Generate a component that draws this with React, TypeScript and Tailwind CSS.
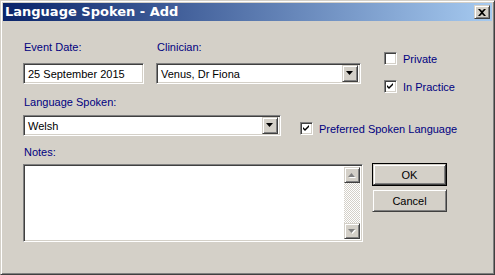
import React from "react";

const font = { fontFamily: '"Liberation Sans", Arial, sans-serif' };

function Arrow({ dir = "down", disabled = false }: { dir?: "up" | "down"; disabled?: boolean }) {
  const pts = dir === "down" ? "0,0 7,0 3.5,4" : "0,4 7,4 3.5,0";
  return (
    <svg width="8" height="5" viewBox="0 0 8 5" className="block">
      {disabled && <polygon points={pts} fill="#ffffff" transform="translate(1,1)" />}
      <polygon points={pts} fill={disabled ? "#808080" : "#000000"} />
    </svg>
  );
}

function RaisedBtn({ className = "", children }: { className?: string; children?: React.ReactNode }) {
  return (
    <div
      className={`flex items-center justify-center bg-[#d4d0c8] border border-t-[#d4d0c8] border-l-[#d4d0c8] border-b-[#404040] border-r-[#404040] shadow-[inset_1px_1px_#ffffff,inset_-1px_-1px_#808080] ${className}`}
    >
      {children}
    </div>
  );
}

function Sunken({ className = "", children }: { className?: string; children?: React.ReactNode }) {
  return (
    <div
      className={`bg-white border border-t-[#808080] border-l-[#808080] border-b-white border-r-white shadow-[inset_1px_1px_#404040,inset_-1px_-1px_#d4d0c8] ${className}`}
    >
      {children}
    </div>
  );
}

function Field({ value, width, dropdown = false }: { value: string; width: string; dropdown?: boolean }) {
  return (
    <Sunken className={`${width} h-[21px] flex items-center p-[2px]`}>
      <span className="flex-1 pl-[2px] text-[11px] leading-[14px] text-black whitespace-nowrap">{value}</span>
      {dropdown && (
        <RaisedBtn className="w-[16px] h-[17px]">
          <Arrow />
        </RaisedBtn>
      )}
    </Sunken>
  );
}

function Check({ checked, label }: { checked: boolean; label: string }) {
  return (
    <div className="flex items-center gap-[6px] h-[13px]">
      <Sunken className="w-[13px] h-[13px] flex items-center justify-center">
        {checked && (
          <svg width="7" height="7" viewBox="0 0 7 7" className="block">
            <path d="M0 2 L2 4 L6 0 L6 2 L2 6 L0 4 Z" fill="#000" />
          </svg>
        )}
      </Sunken>
      <span className="text-[11px] leading-[14px] text-[#000080] whitespace-nowrap">{label}</span>
    </div>
  );
}

function Label({ children }: { children: React.ReactNode }) {
  return <div className="text-[11px] leading-[14px] text-[#000080] pl-[1px] whitespace-nowrap">{children}</div>;
}

export default function App() {
  return (
    <div
      style={font}
      className="w-[495px] h-[275px] bg-[#d4d0c8] border border-t-[#d4d0c8] border-l-[#d4d0c8] border-b-[#404040] border-r-[#404040] shadow-[inset_1px_1px_#ffffff,inset_-1px_-1px_#808080] p-[2px] flex flex-col select-none"
    >
      <div className="h-[18px] flex items-center justify-between pl-[2px] pr-[2px] bg-[linear-gradient(to_right,#0a246a,#a6caf0)]">
        <span
          className="text-white font-bold text-[13px] leading-[16px] whitespace-nowrap"
          style={{ fontFamily: '"DejaVu Sans", Verdana, sans-serif' }}
        >
          Language Spoken - Add
        </span>
        <RaisedBtn className="w-[16px] h-[14px]">
          <svg width="8" height="7" viewBox="0 0 8 7" className="block">
            <path d="M0 0 L2 0 L4 2 L6 0 L8 0 L5 3.5 L8 7 L6 7 L4 5 L2 7 L0 7 L3 3.5 Z" fill="#000" />
          </svg>
        </RaisedBtn>
      </div>

      <div className="flex pl-[20px] pt-[19px]">
        <div className="flex flex-col w-[339px]">
          <div className="flex gap-[12px]">
            <div className="flex flex-col gap-[9px]">
              <Label>Event Date:</Label>
              <Field value="25 September 2015" width="w-[121px]" />
            </div>
            <div className="flex flex-col gap-[9px]">
              <Label>Clinician:</Label>
              <Field value="Venus, Dr Fiona" width="w-[205px]" dropdown />
            </div>
          </div>

          <div className="flex items-end mt-[11px]">
            <div className="flex flex-col gap-[6px]">
              <Label>Language Spoken:</Label>
              <Field value="Welsh" width="w-[258px]" dropdown />
            </div>
            <div className="ml-[19px] mb-[1px]">
              <Check checked label="Preferred Spoken Language" />
            </div>
          </div>

          <div className="flex flex-col gap-[5px] mt-[9px]">
            <Label>Notes:</Label>
            <Sunken className="w-[340px] h-[78px] flex justify-end p-[2px]">
              <div className="w-[16px] h-full flex flex-col bg-[repeating-conic-gradient(#d4d0c8_0%_25%,#ffffff_0%_50%)] bg-[length:2px_2px]">
                <RaisedBtn className="w-[16px] h-[16px]">
                  <Arrow dir="up" disabled />
                </RaisedBtn>
                <div className="flex-1" />
                <RaisedBtn className="w-[16px] h-[16px]">
                  <Arrow disabled />
                </RaisedBtn>
              </div>
            </Sunken>
          </div>
        </div>

        <div className="flex flex-col items-start ml-[10px] pt-[12px]">
          <div className="flex flex-col gap-[15px] pl-[12px]">
            <Check checked={false} label="Private" />
            <Check checked label="In Practice" />
          </div>
          <div className="flex flex-col gap-[3px] mt-[70px]">
            <div className="w-[75px] border border-black">
              <RaisedBtn className="w-[73px] h-[21px] text-[11px] leading-[14px] text-black">OK</RaisedBtn>
            </div>
            <RaisedBtn className="w-[75px] h-[23px] text-[11px] leading-[14px] text-black">Cancel</RaisedBtn>
          </div>
        </div>
      </div>
    </div>
  );
}
